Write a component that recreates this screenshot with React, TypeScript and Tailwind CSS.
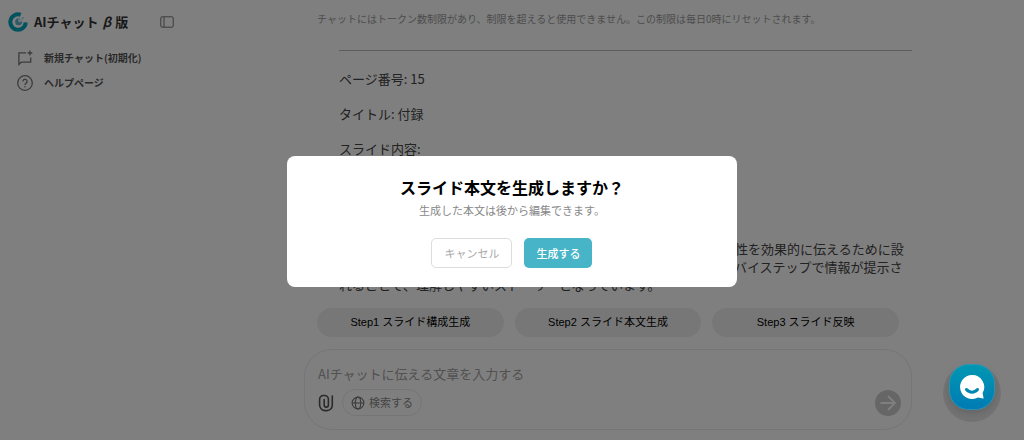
import { useState } from "react"

const STEPS = ["Step1 スライド構成生成", "Step2 スライド本文生成", "Step3 スライド反映"]

function Logo() {
  return (
    <svg viewBox="0 0 60 60" className="w-5 h-5 shrink-0" fill="none" aria-hidden="true">
      <path d="M38 8.5 A23 23 0 1 0 53 31" stroke="#00a5bd" strokeWidth="12" />
      <circle cx="32" cy="29" r="10.5" fill="#5fb4cc" />
      <circle cx="36" cy="25" r="6" fill="#d5f0f6" />
      <circle cx="45" cy="18" r="3" fill="#9fd6e4" />
    </svg>
  )
}

function PanelIcon() {
  return (
    <svg viewBox="0 0 14 12" className="w-3.5 h-3" fill="none" stroke="#777777" aria-hidden="true">
      <rect x="0.8" y="0.8" width="12.4" height="10.4" rx="1.2" />
      <path d="M4 1v10" />
    </svg>
  )
}

function NewChatIcon() {
  return (
    <svg viewBox="0 0 16 16" className="w-4 h-4" fill="none" stroke="#777777" strokeWidth="1.3" aria-hidden="true">
      <path d="M9 2.8H1.9v11.6l2.3-2.2h9.5V7.4" />
      <path d="M12.9 0.6v4.8M10.5 3h4.8" />
    </svg>
  )
}

function HelpIcon() {
  return (
    <svg viewBox="0 0 16 16" className="w-4 h-4" fill="none" stroke="#777777" strokeWidth="1.3" aria-hidden="true">
      <circle cx="8" cy="8" r="7.3" />
      <path d="M5.9 6.4a2.1 2.1 0 1 1 3.3 1.7C8.4 8.7 8 9 8 9.9" />
      <circle cx="8" cy="11.8" r="0.4" fill="#777777" strokeWidth="0.8" />
    </svg>
  )
}

function ClipIcon() {
  return (
    <svg viewBox="0 0 16 18" className="w-4 h-[18px]" fill="none" stroke="#555555" strokeWidth="1.6" strokeLinecap="round" aria-hidden="true">
      <path d="M14.3 2v9.2a5.4 5.4 0 0 1-5.4 5.4H7.2a5.6 5.6 0 0 1-5.6-5.6V5.4a3.9 3.9 0 0 1 3.9-3.9h1a3.9 3.9 0 0 1 3.9 3.9V11a2 2 0 0 1-4.2 0V5.6" />
    </svg>
  )
}

function GlobeIcon() {
  return (
    <svg viewBox="0 0 14 14" className="w-3.5 h-3.5" fill="none" stroke="#777777" strokeWidth="1.1" aria-hidden="true">
      <circle cx="7" cy="7" r="5.9" />
      <ellipse cx="7" cy="7" rx="2.7" ry="5.9" />
      <path d="M1.3 7h11.4" />
    </svg>
  )
}

function Sidebar() {
  return (
    <aside className="w-48 shrink-0 pt-3">
      <div className="flex items-center pl-2 pr-[18px]">
        <Logo />
        <h1 className="ml-1.5 flex-1 flex gap-1 text-[13px] leading-5 font-bold text-[#333333] whitespace-nowrap">
          AIチャット <span className="italic">β</span> 版
        </h1>
        <button type="button" aria-label="サイドバーを閉じる">
          <PanelIcon />
        </button>
      </div>
      <nav className="mt-[18px] flex flex-col gap-[9px] pl-[17px] text-[10px] leading-4 font-bold text-[#555555]">
        <a href="#new" className="flex items-center gap-[11px]">
          <NewChatIcon />
          新規チャット(初期化)
        </a>
        <a href="#help" className="flex items-center gap-[11px]">
          <HelpIcon />
          ヘルプページ
        </a>
      </nav>
    </aside>
  )
}

function Message() {
  return (
    <div className="ml-[35px] text-[13px] leading-[18px] text-[#444444]">
      <hr className="border-[#bbbbbb]" />
      <div className="mt-[19px] flex flex-col gap-[17px]">
        <p>ページ番号: 15</p>
        <p>タイトル: 付録</p>
        <p>スライド内容:</p>
      </div>
      <p className="mt-[82px] whitespace-nowrap">
        この構成は全5ページで、製品の特長と導入効果、そして活用の重要性を効果的に伝えるために設
        <br />
        計されています。全5章は順を追って話が進み、読み手にはステップバイステップで情報が提示さ
        <br />
        れることで、理解しやすいストーリーとなっています。
      </p>
    </div>
  )
}

function Composer() {
  const [text, setText] = useState("")

  return (
    <form className="rounded-[28px] border border-[#eaeaea] pt-3.5 pb-[13px] pl-[13px] pr-2.5" onSubmit={(e) => e.preventDefault()}>
      <input
        type="text"
        aria-label="メッセージ"
        value={text}
        onChange={(e) => setText(e.target.value)}
        placeholder="AIチャットに伝える文章を入力する"
        className="block w-full h-5 text-[13px] leading-5 text-[#444444] placeholder:text-[#a2a2a2] outline-none"
      />
      <div className="mt-[5px] flex items-center">
        <button type="button" aria-label="ファイルを添付">
          <ClipIcon />
        </button>
        <button
          type="button"
          className="ml-2 h-[27px] flex items-center gap-1 rounded-full border border-[#eaeaea] px-2 text-[11px] text-[#888888]"
        >
          <GlobeIcon />
          検索する
        </button>
        <button type="submit" aria-label="送信" className="ml-auto w-[26px] h-[26px] rounded-full bg-[#cccccc]">
          <svg viewBox="0 0 26 26" fill="none" stroke="#ffffff" strokeWidth="1.8" aria-hidden="true">
            <path d="M5.5 13h14.5M13 6l7 7-7 7" />
          </svg>
        </button>
      </div>
    </form>
  )
}

function ConfirmDialog() {
  return (
    <div className="fixed inset-0 flex items-center justify-center bg-black/50">
      <div role="dialog" aria-modal="true" aria-labelledby="dialog-title" className="w-[44%] rounded-lg bg-white pt-[19px] pb-[19px] mt-[3px] text-center">
        <h2 id="dialog-title" className="text-[16px] leading-6 font-bold text-black">
          スライド本文を生成しますか？
        </h2>
        <p className="mt-0.5 text-[11px] leading-[18px] text-[#888888]">生成した本文は後から編集できます。</p>
        <div className="mt-[19px] flex justify-center gap-3 text-[11px]">
          <button type="button" className="h-[30px] rounded-[5px] border border-[#dddddd] px-3 text-[#aaaaaa]">
            キャンセル
          </button>
          <button type="button" className="h-[30px] rounded-[5px] bg-[#47b5c7] px-3 font-medium text-white">
            生成する
          </button>
        </div>
      </div>
    </div>
  )
}

function SupportWidget() {
  return (
    <button type="button" aria-label="サポート" className="fixed right-[23px] bottom-[18px] w-[58px] h-[58px] rounded-full bg-black/10 flex justify-center items-start">
      <svg viewBox="0 0 46 46" className="w-[46px] h-[46px] drop-shadow-md" aria-hidden="true">
        <defs>
          <linearGradient id="widget" x1="0" y1="0" x2="0" y2="1">
            <stop offset="0" stopColor="#0097b2" />
            <stop offset="1" stopColor="#007bb4" />
          </linearGradient>
        </defs>
        <rect x="0.5" y="0.5" width="45" height="45" rx="19" fill="url(#widget)" stroke="#2a9dc0" strokeWidth="0.7" />
        <path d="M23 11a12 12 0 1 0 6 22.4l5 1.2c0.5 0 0.7-0.4 0.5-0.9L33.6 29A12 12 0 0 0 23 11Z" fill="#ffffff" />
        <path d="M17.5 25.5c3 3.5 8 3.5 11 0" fill="none" stroke="#0087b2" strokeWidth="3" strokeLinecap="round" />
      </svg>
    </button>
  )
}

export default function App() {
  return (
    <div className="flex min-h-screen bg-white font-['Noto_Sans_CJK_JP',sans-serif]">
      <Sidebar />
      <main className="flex-1 min-w-0 px-[112px] pt-[11px] pb-2.5 flex flex-col">
        <p className="pl-[13px] text-[10px] leading-4 text-[#999999] whitespace-nowrap">
          チャットにはトークン数制限があり、制限を超えると使用できません。この制限は毎日0時にリセットされます。
        </p>
        <div className="mt-[23px]">
          <Message />
        </div>
        <div className="mt-[14px] mb-3 grid grid-cols-3 gap-[11px] px-[13px]">
          {STEPS.map((step) => (
            <button
              key={step}
              type="button"
              className="h-[29px] rounded-full bg-[#efefef] text-[11px] text-black font-['Liberation_Sans','Noto_Sans_CJK_JP',sans-serif]"
            >
              {step}
            </button>
          ))}
        </div>
        <Composer />
      </main>
      <ConfirmDialog />
      <SupportWidget />
    </div>
  )
}
